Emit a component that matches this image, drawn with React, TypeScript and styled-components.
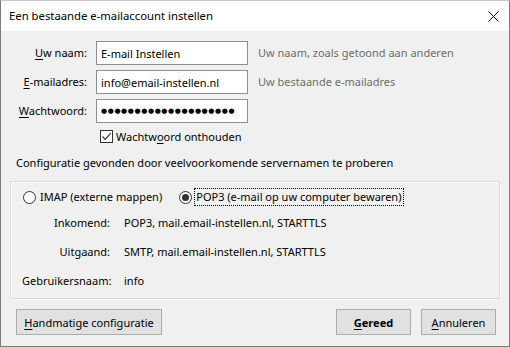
import React from "react";
import styled, { createGlobalStyle } from "styled-components";

const GlobalStyle = createGlobalStyle`
  html, body { margin: 0; padding: 0; }
  body {
    font-family: "Noto Sans", "Open Sans", sans-serif;
    font-size: 11px;
    color: #000;
    background: #fff;
  }
  * { box-sizing: border-box; }
`;

const Window = styled.div`
  width: 510px;
  height: 347px;
  border: 1px solid #7a7a7a;
  border-top-color: #c9c9c9;
  display: flex;
  flex-direction: column;
  background: #f0f0f0;
`;

const TitleBar = styled.div`
  height: 30px;
  background: #fff;
  display: flex;
  align-items: center;
  justify-content: space-between;
  padding: 0 10px 0 8px;
`;

const Title = styled.span`
  font-size: 11.3px;
  line-height: 16px;
  color: #000;
`;

const CloseButton = styled.div`
  width: 12px;
  height: 12px;
  display: flex;
  align-items: center;
  justify-content: center;
`;

const Body = styled.div`
  flex: 1;
  display: flex;
  flex-direction: column;
  padding: 10px 9px 0 9px;
`;

const FormGrid = styled.div`
  display: grid;
  grid-template-columns: 72px 152px 1fr;
  grid-template-rows: 24px 24px 24px 17px;
  column-gap: 9px;
  row-gap: 5px;
  margin-left: 5px;
  align-items: center;
`;

const Label = styled.label`
  text-align: right;
  white-space: nowrap;
  line-height: 16px;
`;

const TextBox = styled.input`
  width: 152px;
  height: 24px;
  border: 1px solid #8f8f8f;
  background: #fff;
  padding: 0 4px;
  font-family: "Noto Sans", sans-serif;
  font-size: 11px;
  color: #000;
  outline: none;
`;

const PasswordBox = styled(TextBox)`
  font-family: "DejaVu Sans", sans-serif;
  font-size: 7px;
  letter-spacing: 0.6px;
  padding: 0 4px;
`;

const Hint = styled.span`
  margin-left: 1px;
  color: #6d6d6d;
  white-space: nowrap;
  line-height: 16px;
`;

const CheckRow = styled.label`
  grid-column: 2 / 4;
  display: flex;
  align-items: center;
  gap: 3px;
  padding-left: 4px;
  height: 17px;
  white-space: nowrap;
`;

const CheckBox = styled.span`
  width: 13px;
  height: 13px;
  border: 1px solid #333;
  background: #fff;
  display: flex;
  align-items: center;
  justify-content: center;
`;

const ConfigText = styled.div`
  margin: 10px 0 0 6px;
  line-height: 16px;
  white-space: nowrap;
`;

const Group = styled.div`
  margin-top: 10px;
  height: 118px;
  border: 1px solid #dcdcdc;
  box-shadow: inset 1px 1px 0 #fff, 1px 1px 0 #fff;
  padding: 6px 11px 0 11px;
  display: flex;
  flex-direction: column;
`;

const RadioRow = styled.div`
  display: flex;
  align-items: center;
  height: 18px;
`;

const RadioOption = styled.label<{ $gapAfter?: number }>`
  display: flex;
  align-items: center;
  gap: 2px;
  margin-left: 1px;
  margin-right: ${(p) => p.$gapAfter ?? 0}px;
  white-space: nowrap;
`;

const RadioCircle = styled.span<{ $checked?: boolean }>`
  width: 13px;
  height: 13px;
  border-radius: 50%;
  border: 1px solid #333;
  background: #fff;
  display: flex;
  align-items: center;
  justify-content: center;
  &::after {
    content: "";
    width: 7px;
    height: 7px;
    border-radius: 50%;
    background: ${(p) => (p.$checked ? "#333" : "transparent")};
  }
`;

const RadioText = styled.span<{ $focused?: boolean }>`
  padding: 0 2px 0 1px;
  line-height: 16px;
  border: 1px dotted ${(p) => (p.$focused ? "#000" : "transparent")};
`;

const InfoGrid = styled.div`
  margin-top: 9px;
  display: grid;
  grid-template-columns: 88px 1fr;
  grid-auto-rows: 16px;
  column-gap: 14px;
  row-gap: 13px;
  align-items: center;
`;

const InfoLabel = styled.span`
  text-align: right;
  white-space: nowrap;
  line-height: 16px;
`;

const InfoValue = styled.span`
  white-space: nowrap;
  line-height: 16px;
`;

const ButtonBar = styled.div`
  margin: 10px 4px 0 6px;
  display: flex;
  align-items: center;
  gap: 10px;
`;

const Spacer = styled.div`
  flex: 1;
`;

const Button = styled.button<{ $width: number; $bold?: boolean }>`
  width: ${(p) => p.$width}px;
  height: 26px;
  background: #e1e1e1;
  border: 1px solid #adadad;
  font-family: "Noto Sans", sans-serif;
  font-size: 11px;
  font-weight: ${(p) => (p.$bold ? 700 : 400)};
  color: #000;
  padding: 0;
  display: flex;
  align-items: center;
  justify-content: center;
`;

const Key = styled.span`
  text-decoration: underline;
  text-underline-offset: 2px;
`;

export default function App() {
  return (
    <>
      <GlobalStyle />
      <Window>
        <TitleBar>
          <Title>Een bestaande e-mailaccount instellen</Title>
          <CloseButton>
            <svg width="11" height="11" viewBox="0 0 11 11">
              <path d="M0.5 0.5 L10.5 10.5 M10.5 0.5 L0.5 10.5" stroke="#111" strokeWidth="1" />
            </svg>
          </CloseButton>
        </TitleBar>
        <Body>
          <FormGrid>
            <Label>
              <Key>U</Key>w naam:
            </Label>
            <TextBox readOnly value="E-mail Instellen" />
            <Hint>Uw naam, zoals getoond aan anderen</Hint>
            <Label>
              <Key>E</Key>-mailadres:
            </Label>
            <TextBox readOnly value="info@email-instellen.nl" />
            <Hint>Uw bestaande e-mailadres</Hint>
            <Label>
              <Key>W</Key>achtwoord:
            </Label>
            <PasswordBox readOnly value={"●".repeat(20)} />
            <span />
            <span />
            <CheckRow>
              <CheckBox>
                <svg width="11" height="11" viewBox="0 0 11 11">
                  <path d="M1.5 5.5 L4.2 8.3 L9.8 2.2" fill="none" stroke="#333" strokeWidth="1.2" />
                </svg>
              </CheckBox>
              <span>
                Wachtw<Key>o</Key>ord onthouden
              </span>
            </CheckRow>
          </FormGrid>
          <ConfigText>Configuratie gevonden door veelvoorkomende servernamen te proberen</ConfigText>
          <Group>
            <RadioRow>
              <RadioOption $gapAfter={13}>
                <RadioCircle />
                <RadioText>IMAP (externe mappen)</RadioText>
              </RadioOption>
              <RadioOption>
                <RadioCircle $checked />
                <RadioText $focused>POP3 (e-mail op uw computer bewaren)</RadioText>
              </RadioOption>
            </RadioRow>
            <InfoGrid>
              <InfoLabel>Inkomend:</InfoLabel>
              <InfoValue>POP3, mail.email-instellen.nl, STARTTLS</InfoValue>
              <InfoLabel>Uitgaand:</InfoLabel>
              <InfoValue>SMTP, mail.email-instellen.nl, STARTTLS</InfoValue>
              <InfoLabel>Gebruikersnaam:</InfoLabel>
              <InfoValue>info</InfoValue>
            </InfoGrid>
          </Group>
          <ButtonBar>
            <Button $width={146}>
              <span>
                <Key>H</Key>andmatige configuratie
              </span>
            </Button>
            <Spacer />
            <Button $width={75} $bold>
              <span>
                <Key>G</Key>ereed
              </span>
            </Button>
            <Button $width={75}>
              <span>
                <Key>A</Key>nnuleren
              </span>
            </Button>
          </ButtonBar>
        </Body>
      </Window>
    </>
  );
}
